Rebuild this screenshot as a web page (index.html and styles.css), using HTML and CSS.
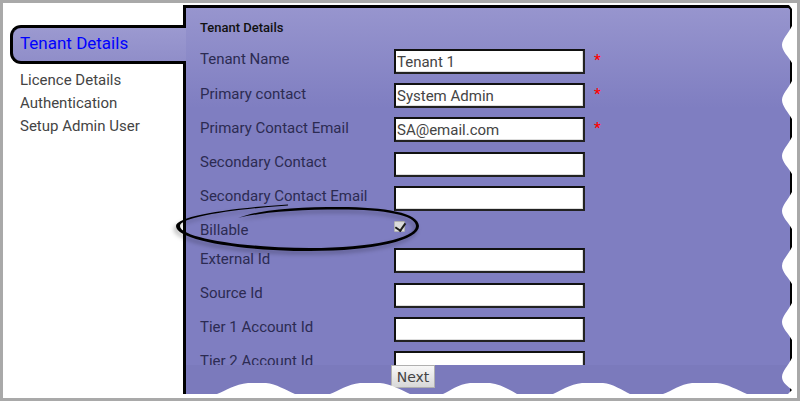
FILE: index.html
```html
<!DOCTYPE html>
<html lang="en">
<head>
    <meta charset="UTF-8">
    <title>Tenant Details</title>
    <link rel="stylesheet" href="styles.css">
</head>
<body>
    <div class="window">
        <nav class="wizard-nav">
            <a class="nav-tab" href="#">Tenant Details</a>
            <a class="nav-link" href="#">Licence Details</a>
            <a class="nav-link" href="#">Authentication</a>
            <a class="nav-link" href="#">Setup Admin User</a>
        </nav>

        <main class="panel">
            <form class="form-scroll">
                <h4>Tenant Details</h4>
                <div class="field"><label>Tenant Name</label><input type="text" value="Tenant 1"><span class="required">*</span></div>
                <div class="field"><label>Primary contact</label><input type="text" value="System Admin"><span class="required">*</span></div>
                <div class="field"><label>Primary Contact Email</label><input type="text" value="SA@email.com"><span class="required">*</span></div>
                <div class="field"><label>Secondary Contact</label><input type="text"></div>
                <div class="field"><label>Secondary Contact Email</label><input type="text"></div>
                <div class="field field-check"><label>Billable</label><input class="check" type="checkbox" checked></div>
                <div class="field"><label>External Id</label><input type="text"></div>
                <div class="field"><label>Source Id</label><input type="text"></div>
                <div class="field"><label>Tier 1 Account Id</label><input type="text"></div>
                <div class="field"><label>Tier 2 Account Id</label><input type="text"></div>
            </form>
            <div class="panel-footer">
                <button class="next-btn" type="button">Next</button>
            </div>
        </main>

        <!-- torn paper edge, drawn over the panel -->
        <svg class="overlay" viewBox="3 3 794 395" aria-hidden="true">
            <path class="torn" d="M794 3 H797 V398 H184 V394 H217 C225 391 235 384 248 383 H266 C276 384 286 390 295 394 H330 C338 391 348 384 360 383 H380 C390 384 402 390 410 394 H443 C450 391 458 384 470 383 H490 C500 384 510 390 517 394 H553 C560 391 570 384 582 383 H603 C613 384 622 390 630 394 H663 C672 391 680 384 692 383 H717 C727 384 738 390 747 394 H788 L792 390 C788 386 782 383 782 377 C782 371 788 366 792 358 V340 C788 333 782 328 782 322 C782 316 788 311 792 303 V284 C788 277 782 272 782 266 C782 260 788 255 792 247 V229 C788 222 782 217 782 211 C782 205 788 200 792 192 V174 C788 167 782 162 782 156 C782 150 788 145 792 137 V119 C788 112 782 106 782 100 C782 94 788 89 792 81 V63 C788 56 782 51 782 45 C782 39 788 34 792 26 V9 L789 5 V3 Z"/>
        </svg>

        <!-- hand drawn ring round the Billable row -->
        <svg class="overlay callout" viewBox="3 3 794 395" aria-hidden="true">
            <path d="M238 218 C262 209 300 207 340 207 C385 207 419 213 419 226 C419 240 375 251 310 251 C240 251 176 240 176 226 C176 216 230 208 288 204.5 L288 205.5 C235 209 180 217 180 226 C180 238 245 248 310 248 C372 248 416 238 416 226 C416 215 385 209.5 340 209.5 C300 209.5 262 212 238 218 Z"/>
        </svg>
    </div>
</body>
</html>
```

FILE: styles.css
```css
/* Page frame */
* {
    box-sizing: border-box;
}

body {
    margin: 0;
    font-family: Roboto, Arial, sans-serif;
    background: white;
}

.window {
    position: relative;
    display: flex;
    height: 401px;
    padding: 2px 4px 4px 0;
    border: 3px solid #a9a9a9;
    overflow: hidden;
}

/* Left hand wizard steps */
.wizard-nav {
    display: flex;
    flex-direction: column;
    flex: 0 0 183px;
    padding: 20px 0 0 7px;
    position: relative;
    z-index: 1;
    margin-right: -3px;
}

.nav-tab {
    height: 39px;
    margin-bottom: 5px;
    padding: 0 0 4px 7px;
    display: flex;
    align-items: center;
    color: blue;
    font-size: 17px;
    text-decoration: none;
    background: linear-gradient(#9b99d0, #908ec9);
    border: 3px solid black;
    border-right: none;
    border-radius: 11px 0 0 11px;
}

.nav-link {
    height: 23px;
    padding-left: 10px;
    color: #444;
    font-size: 15px;
    line-height: 23px;
    text-decoration: none;
}

/* Main panel */
.panel {
    flex: 1;
    display: flex;
    flex-direction: column;
    border: 3px solid black;
    border-bottom: none;
    border-radius: 0 5px 0 0;
    background: linear-gradient(#9795ce, #7f7ec1 100px);
}

.form-scroll {
    height: 357px;
    padding: 0 0 0 14px;
    overflow: hidden;
}

.form-scroll h4 {
    margin: 0;
    height: 41px;
    padding-top: 12px;
    color: #111;
    font-size: 13px;
    line-height: 16px;
    font-weight: 500;
}

.field {
    display: flex;
    height: 34.2px;
    align-items: flex-start;
}

.field-check {
    height: 28.4px;
}

.field label {
    flex: 0 0 194px;
    margin-top: 0.4px;
    color: #2c2b52;
    font-size: 15px;
    line-height: 20px;
}

.field input[type="text"] {
    width: 191px;
    height: 25px;
    padding: 2px 1px;
    color: #444;
    font-family: inherit;
    font-size: 15px;
    background: white;
    border: 2px solid #111;
    border-right-color: #222;
    border-bottom-color: #222;
    border-radius: 0;
    box-shadow: inset -1px -1px 0 #ddd;
    outline: none;
}

.required {
    margin: 1px 0 0 9px;
    color: red;
    font-size: 15px;
    font-weight: 500;
    line-height: 20px;
}

/* Billable tick box */
.check {
    appearance: none;
    position: relative;
    width: 11px;
    height: 11px;
    margin: 1px 0 0 0;
    background: #dcdcdc;
    border: 1px solid #b5b5b5;
    border-radius: 1px;
}

.check::after {
    content: "";
    position: absolute;
    left: 2px;
    top: -1px;
    width: 5px;
    height: 8px;
    border: solid #1c1c1c;
    border-width: 0 2.5px 2.5px 0;
    transform: rotate(35deg);
}

/* Footer with the Next button */
.panel-footer {
    flex: 1;
    padding-left: 205px;
    background: #7b7abc;
}

.next-btn {
    display: block;
    width: 44px;
    height: 23px;
    padding: 0;
    color: #444;
    font-family: "DejaVu Sans", sans-serif;
    font-size: 14px;
    background: linear-gradient(#f8f8f8, #d8d8d8);
    border: 1px solid #b0b0b0;
}

/* Overlays */
.overlay {
    position: absolute;
    top: 0;
    left: 0;
    width: 794px;
    height: 395px;
    z-index: 2;
}

.torn {
    fill: white;
}

.callout {
    z-index: 3;
    filter: drop-shadow(-2px 3px 2px rgba(0, 0, 0, 0.3));
}
```
